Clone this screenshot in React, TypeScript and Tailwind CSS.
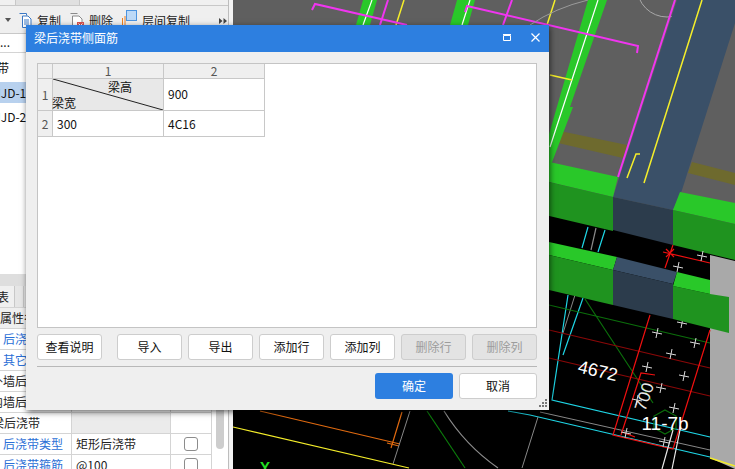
import React from "react";

function Toolbar() {
  return (
    <div className="h-[28px] shrink-0 bg-[#efefef] border-b border-[#c8c8c8] flex items-start pt-[7px] text-[12px] leading-[16px] text-[#222]">
      <svg width="6" height="4" className="ml-[5px] mt-[5px]" viewBox="0 0 6 4"><path d="M0 0H6L3 4Z" fill="#555" /></svg>
      <svg width="13" height="15" viewBox="0 0 13 15" className="ml-[8px]">
        <path d="M0.5 0.5H7.5V2.5M3.5 3H9L12 6V14.5H3.5Z" fill="#fff" stroke="#3b78c4" />
        <path d="M5 7H10M5 9H10M5 11H10" stroke="#3b78c4" />
      </svg>
      <span className="ml-[5px]">复制</span>
      <svg width="14" height="16" viewBox="0 0 14 16" className="ml-[9px]">
        <path d="M0.5 0.5H7.5M2.5 3H9L12 6V14.5H2.5Z" fill="#fff" stroke="#8a8a8a" />
        <rect x="7" y="9" width="7" height="7" fill="#d9534f" />
        <path d="M8.5 10.5L12.5 14.5M12.5 10.5L8.5 14.5" stroke="#fff" />
      </svg>
      <span className="ml-[5px]">删除</span>
      <svg width="15" height="15" viewBox="0 0 15 15" className="ml-[9px] -mt-[3px]">
        <path d="M0.5 15V8M3 15V6" stroke="#f08020" />
        <rect x="4.5" y="0.5" width="10" height="10" fill="#bcd9f7" stroke="#4c94e0" />
      </svg>
      <span className="ml-[5px]">层间复制</span>
      <svg width="8" height="6" viewBox="0 0 8 6" className="ml-[29px] mt-[5px]"><path d="M0 0L3.5 3L0 6ZM4.5 0L8 3L4.5 6Z" fill="#444" /></svg>
    </div>
  );
}

function PropRow({ name, value, check, blue, shade, indent }: { name: string; value?: string; check?: boolean; blue?: boolean; shade?: boolean; indent?: number }) {
  return (
    <div className="h-[21px] flex border-b border-[#d4d4d4] text-[12px] leading-[20px] bg-white">
      <div className={`w-[72px] shrink-0 border-r border-[#d4d4d4] whitespace-nowrap overflow-hidden ${blue ? "text-[#2b6fd6]" : "text-[#222]"}`}>
        <span className={indent === 1 ? "pl-[3px]" : indent === 2 ? "-ml-[9px] inline-block" : "-ml-[8px] inline-block"}>{name}</span>
      </div>
      <div className={`w-[99px] shrink-0 border-r border-[#d4d4d4] pl-[4px] text-[#222] ${shade ? "bg-[#ebebeb]" : ""}`}>{value}</div>
      <div className="w-[41px] shrink-0 border-r border-[#d4d4d4] flex items-center justify-center pr-[1px]">
        {check && <span className="w-[14px] h-[14px] border border-[#8c8c8c] rounded-[3px] bg-white" />}
      </div>
    </div>
  );
}

function LeftPanel() {
  return (
    <div className="w-[233px] h-[469px] shrink-0 bg-[#f3f3f3] overflow-hidden">
      <div className="w-[229px] h-[469px] bg-white border-r border-[#bdbdbd] flex flex-col overflow-hidden">
        <div className="h-[6px] shrink-0 bg-[#f0f0f0] border-b border-[#c8c8c8] flex">
          <div className="ml-[15px] w-[65px] bg-[#e0e0e0] border-l border-r border-[#c8c8c8]" />
        </div>
        <Toolbar />
        <div className="h-[19px] shrink-0 border-b border-[#d4d4d4] text-[12px] leading-[16px] text-[#222]">...</div>
        <div className="h-[29px] shrink-0 text-[12px] leading-[29px] -ml-[3px] text-[#111]">带</div>
        <div className="h-[21px] shrink-0 bg-[#b8d1ee] text-[12px] leading-[21px] text-[#111] whitespace-nowrap"><span className="-ml-[8px] inline-block">HJD-1</span></div>
        <div className="h-[28px] shrink-0 text-[12px] leading-[28px] text-[#111] whitespace-nowrap"><span className="-ml-[8px] inline-block">HJD-2</span></div>
        <div className="h-[143px] shrink-0" />
        <div className="h-[12px] shrink-0 bg-[#dedede]" />
        <div className="h-[22px] shrink-0 bg-[#e6e6e6] flex border-b border-[#d4d4d4] text-[12px] leading-[21px] text-[#222]">
          <div className="w-[15px] bg-[#f0f0f0] border-r border-[#c8c8c8] -indent-[3px] overflow-hidden">表</div>
          <div className="w-[9px] border-r border-[#c8c8c8]" />
        </div>
        <div className="flex shrink-0">
          <div className="w-[212px] shrink-0">
            <div className="h-[21px] bg-[#efefef] border-b border-[#d4d4d4] text-[12px] leading-[20px] text-[#222] whitespace-nowrap overflow-hidden">属性名称</div>
            <PropRow name="后浇带" blue indent={1} />
            <PropRow name="其它" blue indent={1} />
            <PropRow name="外墙后浇带" indent={2} />
            <PropRow name="内墙后浇带" indent={2} />
            <PropRow name="梁后浇带" shade />
            <PropRow name="后浇带类型" value="矩形后浇带" check blue indent={1} />
            <PropRow name="后浇带箍筋" value="@100" check blue indent={1} />
          </div>
          <div className="w-[16px] shrink-0 pl-[4px]">
            <div className="w-[8px] h-[141px] bg-[#cdcdcd] rounded-b-[4px]" />
          </div>
        </div>
      </div>
    </div>
  );
}

function Cross({ x, y }: { x: number; y: number }) {
  return <path d={`M${x - 5} ${y - 1}L${x + 5} ${y + 1}M${x + 1} ${y - 5}L${x - 1} ${y + 5}`} stroke="#d8d8d8" strokeWidth="1" />;
}

function Canvas() {
  const crosses = [
    [678, 267], [682, 323], [657, 333], [695, 343], [671, 354], [647, 367], [684, 376],
    [661, 388], [637, 400], [674, 408], [626, 433], [664, 442], [702, 256],
  ];
  return (
    <svg width="502" height="469" viewBox="233 0 502 469" className="block shrink-0">
      <rect x="233" y="0" width="502" height="469" fill="#000" />
      <polygon points="233,0 735,0 735,230 540,180 233,140" fill="#5f5f5f" />
      <polygon points="560,131 627,145 623,158 558,143" fill="#6e6a2e" />
      <polygon points="692,162 735,173 735,185 688,173" fill="#6e6a2e" />
      <polygon points="363,0 377,0 370,25 356,25" fill="#29c829" />
      <polygon points="457,0 475,0 468,25 450,25" fill="#29c829" />
      <polygon points="588,0 607,0 570,107 573,107 551,165 540,165" fill="#29c829" />
      <path d="M372 0L363 25M470 0L462 25M598 0L550 147" stroke="#fff" strokeWidth="1.2" />
      <path d="M388 0L380 25M512 0L503 25" stroke="#f035f0" strokeWidth="2" />
      <path d="M404 0L396 25M555 0L547 25M550 75L572 80" stroke="#f5ee2a" strokeWidth="1.5" fill="none" />
      <path d="M312 10L315 4L407 25M465 12L467 6L638 46L637 53" stroke="#f035f0" strokeWidth="2" fill="none" />
      <path d="M530 25Q555 8 588 0" stroke="#9a9a9a" fill="none" />
      <circle cx="667" cy="-13" r="30" stroke="#a8a8a8" fill="none" />
      <polygon points="677,0 735,0 735,23 682,190 673,210 613,197" fill="#3a5068" />
      <path d="M675 0L618 177" stroke="#f035f0" strokeWidth="2" />
      <path d="M702 0L644 183M640 154H636L627 178" stroke="#f5ee2a" strokeWidth="1.5" fill="none" />
      <polygon points="613,197 673,210 673,245 613,230" fill="#2c3c4c" />
      <polygon points="545,161 618,177 613,197 545,181" fill="#29c829" />
      <polygon points="545,181 613,197 613,231 545,215" fill="#1f931f" />
      <polygon points="680,192 735,203 735,224 673,210" fill="#29c829" />
      <polygon points="673,210 735,224 735,260 673,245" fill="#1f931f" />
      <polygon points="710,255 735,261 735,469 710,458" fill="#a9a9a9" />
      <path d="M710 458L735 466" stroke="#f5ee2a" strokeWidth="1.5" />
      <path d="M588 227L582 248M605 230L598 252" stroke="#1fd6e6" strokeWidth="1.2" />
      <path d="M596 228L591 250" stroke="#8a8a8a" strokeWidth="1.2" />
      <path d="M663 252L710 263M673 245L665 268M666 249L674 257M674 249L666 257" stroke="#f01010" strokeWidth="1.2" />
      <path d="M568 295L552 400L710 437M583 298L563 355M530 415L710 457M508 411L530 415" stroke="#1fd6e6" strokeWidth="1.2" fill="none" />
      <path d="M575 295L563 333M540 412L710 450M538 417L522 468" stroke="#888" fill="none" />
      <path d="M549 305L710 343M585 299L653 403" stroke="#0b6e0b" strokeWidth="1.2" fill="none" />
      <polygon points="665,410 676,416 676,428 665,434 654,428 654,416" stroke="#0b6e0b" strokeWidth="1.2" fill="none" />
      <path d="M549 330L710 368M549 358L710 396" stroke="#8a0808" strokeWidth="1.2" />
      <path d="M650 315L613 435L673 449L710 330M655 375L641 373L621 435M622 432L635 437" stroke="#f01010" strokeWidth="1.2" fill="none" />
      {crosses.map(([x, y]) => <Cross key={`${x}-${y}`} x={x} y={y} />)}
      <path d="M672 469L680 430M662 469L673 430" stroke="#e8e8e8" strokeWidth="1.2" />
      <path d="M260 411L400 444M402 412L391 448M387 443L399 446" stroke="#e06a10" strokeWidth="1.2" fill="none" />
      <path d="M410 411L393 464" stroke="#888" />
      <path d="M233 427L409 468" stroke="#f5ee2a" strokeWidth="1.2" />
      <path d="M427 411L465 468" stroke="#0b7a0b" strokeWidth="1.2" />
      <path d="M444 411Q465 445 498 468" stroke="#8c8c8c" strokeWidth="1.2" fill="none" />
      <polygon points="549,242 617,257 613,270 549,255" fill="#29c829" />
      <polygon points="549,255 613,270 613,305 549,290" fill="#1f931f" />
      <polygon points="617,257 677,272 673,284 613,270" fill="#3a5068" />
      <polygon points="613,270 673,284 673,319 613,305" fill="#2c3c4c" />
      <polygon points="673,286 710,294 729,297 729,333 673,319" fill="#1f931f" />
      <polygon points="677,272 710,280 710,294 673,286" fill="#29c829" />
      <text x="598" y="377" fontSize="18" fill="#fff" textAnchor="middle" transform="rotate(13 598 370)" fontFamily="'Liberation Sans', sans-serif">4672</text>
      <text x="645" y="402" fontSize="17" fill="#e8e8e8" textAnchor="middle" transform="rotate(-72 645 397)" fontFamily="'Liberation Sans', sans-serif">700</text>
      <text x="665" y="430" fontSize="19" fill="#fff" textAnchor="middle" fontFamily="'Liberation Sans', sans-serif">11-7b</text>
      <text x="265" y="472" fontSize="15" fontWeight="700" fill="#22e022" textAnchor="middle" fontFamily="'Liberation Sans', sans-serif">Y</text>
    </svg>
  );
}

function Btn({ label, w = "w-[65px]", disabled }: { label: string; w?: string; disabled?: boolean }) {
  return (
    <div className={`${w} h-[26px] rounded-[3px] border flex items-center justify-center text-[12px] leading-none ${disabled ? "bg-[#e3e3e3] border-[#cdcdcd] text-[#9c9c9c]" : "bg-white border-[#cdcdcd] text-[#111]"}`}>
      {label}
    </div>
  );
}

function SheetGrid() {
  const head = "bg-[#efefef] border-r border-b border-[#c8c8c8] flex items-center justify-center text-[12px] leading-none text-[#555]";
  const cell = "bg-white border-r border-b border-[#c8c8c8] flex items-center pl-[4px] text-[12px] leading-none text-[#111]";
  return (
    <div className="grid grid-cols-[15px_111px_101px] grid-rows-[15px_32px_26px] w-[227px]">
      <div className={head} />
      <div className={head}>1</div>
      <div className={head}>2</div>
      <div className={head}>1</div>
      <div className="relative bg-[#e8e8e8] border-r border-b border-[#c8c8c8] text-[12px] leading-none text-[#111]">
        <svg width="110" height="31" viewBox="0 0 110 31" className="absolute left-0 top-0">
          <path d="M0 0L110 31" stroke="#222" strokeWidth="1" />
        </svg>
        <span className="absolute left-[55px] top-[2px]">梁高</span>
        <span className="absolute -left-px top-[18px]">梁宽</span>
      </div>
      <div className={`${cell} pb-[2px]`}>900</div>
      <div className={head}>2</div>
      <div className={cell}>300</div>
      <div className={cell}>4C16</div>
    </div>
  );
}

function Dialog() {
  return (
    <div className="absolute left-[26px] top-[25px] w-[523px] h-[385px] bg-[#efefef] flex flex-col shadow-[1px_2px_6px_rgba(0,0,0,0.6)]">
      <div className="h-[27px] bg-[#2d7fe0] flex items-center pl-[8px] text-white text-[12px] leading-none shrink-0">
        <span className="flex-1 -mt-[1px]">梁后浇带侧面筋</span>
        <svg width="8" height="7" viewBox="0 0 8 7" className="mr-[20px] -mt-[2px]">
          <path d="M0.5 1.5H7.5V6.5H0.5Z" fill="none" stroke="#fff" />
          <path d="M0 0.5H8" stroke="#fff" />
        </svg>
        <svg width="9" height="9" viewBox="0 0 9 9" className="mr-[9px] -mt-[2px]">
          <path d="M0.5 0.5L8.5 8.5M8.5 0.5L0.5 8.5" stroke="#fff" strokeWidth="1.2" />
        </svg>
      </div>
      <div className="flex-1 relative pt-[11px] pl-[11px] pr-[12px] flex flex-col">
        <div className="h-[265px] bg-white border border-[#c4c4c4] shrink-0">
          <SheetGrid />
        </div>
        <div className="flex mt-[6px]">
          <Btn label="查看说明" />
          <div className="flex gap-[6px] ml-[15px]">
            <Btn label="导入" />
            <Btn label="导出" />
            <Btn label="添加行" />
            <Btn label="添加列" />
            <Btn label="删除行" disabled />
            <Btn label="删除列" disabled />
          </div>
        </div>
        <div className="h-px bg-[#b8b8b8] mt-[6px]" />
        <div className="flex justify-end gap-[6px] mt-[6px]">
          <div className="w-[78px] h-[26px] rounded-[3px] bg-[#2d7fe0] text-white flex items-center justify-center text-[12px] leading-none">确定</div>
          <Btn label="取消" w="w-[78px]" />
        </div>
        <svg width="9" height="9" viewBox="0 0 9 9" className="absolute right-[1px] bottom-[2px]">
          <path d="M6 0h2v2H6zM3 3h2v2H3zM6 3h2v2H6zM0 6h2v2H0zM3 6h2v2H3zM6 6h2v2H6z" fill="#777" />
        </svg>
      </div>
    </div>
  );
}

export default function App() {
  return (
    <div className="relative w-[735px] h-[469px] overflow-hidden flex font-['Noto_Sans_CJK_SC','Noto_Sans',sans-serif]">
      <LeftPanel />
      <Canvas />
      <Dialog />
    </div>
  );
}
